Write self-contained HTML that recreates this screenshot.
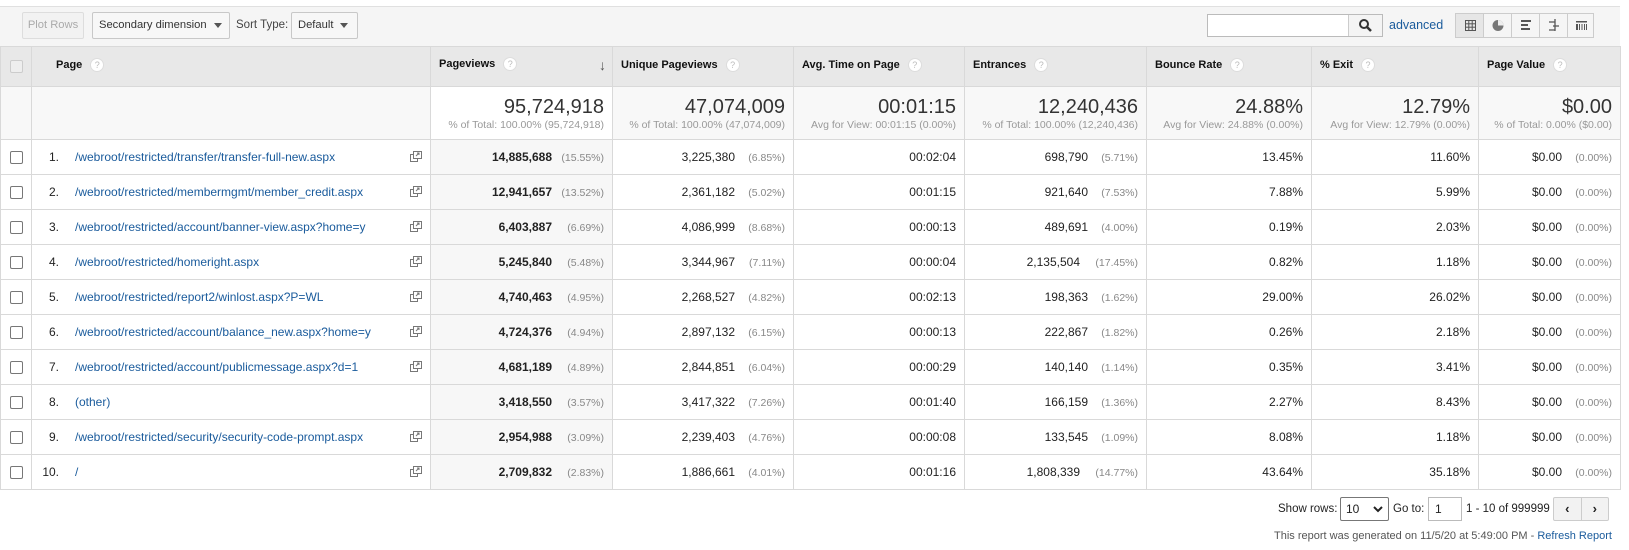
<!DOCTYPE html>
<html><head><meta charset="utf-8"><style>
*{box-sizing:border-box;margin:0;padding:0}
body{width:1629px;height:550px;background:#fff;font-family:"Liberation Sans",Arial,sans-serif;color:#222;position:relative;overflow:hidden;font-size:12px}
.topline{position:absolute;left:0;top:0;width:1620px;height:7px;background:#fff;border-bottom:1px solid #e0e0e0}
.tb{position:absolute;left:0;top:7px;width:1620px;height:39px;background:#f5f5f5}
.btn{position:absolute;top:5px;height:27px;border:1px solid #c8c8c8;border-radius:2px;background:#f7f7f7;font-size:11.2px;line-height:25px;padding:0 6px;color:#333;white-space:nowrap;overflow:hidden}
.caret{display:inline-block;width:0;height:0;border-left:4px solid transparent;border-right:4px solid transparent;border-top:5px solid #555;margin-left:7px;vertical-align:middle}
table{position:absolute;left:0;top:46px;border-collapse:collapse;width:1620px;table-layout:fixed}
td,th{border:1px solid #d9d9d9;font-size:12px;white-space:nowrap}
th{background:#e8e8e8;height:40px;text-align:left;font-weight:bold;font-size:11px;padding-left:8px;color:#111;padding-bottom:3px}
.q{display:inline-block;width:14px;height:14px;border-radius:50%;background:#fff;border:1px solid #ddd;color:#bbb;font-size:9px;line-height:12px;text-align:center;font-weight:normal;margin-left:8px;vertical-align:middle}
tr.tot td{height:53px;background:#f8f8f8;text-align:right;padding-right:8px;vertical-align:top;padding-top:9px}
.big{font-size:20px;color:#333;line-height:22px}
.sm{font-size:10.5px;color:#999;line-height:14px}
tr.r td{height:35px;text-align:right;padding-right:8px;color:#222}
tr.r td.pv{background:#f7f7f7;font-weight:bold}
.pc{color:#888;font-size:10.5px;font-weight:normal;display:inline-block;width:52px;text-align:right}
.pc2{color:#888;font-size:10.5px;display:inline-block;width:50px;text-align:right}
.cb{width:13px;height:13px;border:1px solid #777;border-radius:2px;display:inline-block;background:#fff;vertical-align:middle}
td.c0{text-align:center!important;padding:0!important}
td.pg{text-align:left!important;padding:0!important;position:relative}
.n{display:inline-block;width:27px;text-align:right;margin-right:16px}
a{color:#1a5b9c;text-decoration:none}
.cp{position:absolute;left:378px;top:11px;width:12px;height:11px}
</style></head><body>
<div class="topline"></div>
<div class="tb">
<div class="btn" style="left:22px;width:62px;padding:0;text-align:center;color:#aaa;background:#f2f2f2;border-color:#ddd">Plot Rows</div>
<div class="btn" style="left:92px;width:138px">Secondary dimension<span class="caret"></span></div>
<div style="position:absolute;left:236px;top:5px;line-height:27px;font-size:11.5px;color:#444">Sort Type:</div>
<div class="btn" style="left:291px;width:67px">Default<span class="caret"></span></div>
<div style="position:absolute;left:1207px;top:7px;width:176px;height:23px;border:1px solid #bbb;background:#fff"><div style="position:absolute;left:140px;top:0;width:34px;height:21px;border-left:1px solid #ccc;background:#f4f4f4"><svg width="34" height="21"><circle cx="15" cy="9" r="4" fill="none" stroke="#333" stroke-width="2"/><line x1="18" y1="12" x2="22" y2="16" stroke="#333" stroke-width="2.5"/></svg></div></div>
<div style="position:absolute;left:1389px;top:8px;line-height:20px;font-size:12.5px;color:#1a5b9c">advanced</div>
<div style="position:absolute;left:1455px;top:6px;width:139px;height:25px;border:1px solid #ccc;background:#f5f5f5;display:flex">
<div style="width:28px;border-right:1px solid #ccc;background:#e6e6e6"><svg width="28" height="23"><g stroke="#555" fill="none"><rect x="9.5" y="6.5" width="10" height="10"/><line x1="12.8" y1="6.5" x2="12.8" y2="16.5"/><line x1="16.2" y1="6.5" x2="16.2" y2="16.5"/><line x1="9.5" y1="9.8" x2="19.5" y2="9.8"/><line x1="9.5" y1="13.2" x2="19.5" y2="13.2"/></g></svg></div>
<div style="width:28px;border-right:1px solid #ccc"><svg width="28" height="23"><circle cx="14" cy="11.5" r="5.5" fill="#777"/><path d="M14 11.5V6A5.5 5.5 0 0 1 19.5 11.5Z" fill="#eee"/></svg></div>
<div style="width:28px;border-right:1px solid #ccc"><svg width="28" height="23"><rect x="9" y="6" width="10" height="2" fill="#555"/><rect x="9" y="10" width="7" height="2" fill="#555"/><rect x="9" y="14" width="9" height="2" fill="#555"/></svg></div>
<div style="width:28px;border-right:1px solid #ccc"><svg width="28" height="23"><g stroke="#555" stroke-width="1.3" fill="none"><path d="M9 8h6M15 5v12M13 12h6M9 16h6"/></g></svg></div>
<div style="width:27px"><svg width="27" height="23"><g fill="#555"><rect x="8" y="7" width="11" height="1.5"/><rect x="8" y="10" width="2" height="6"/><rect x="11" y="10" width="1" height="6"/><rect x="13.5" y="10" width="1" height="6"/><rect x="16" y="10" width="1" height="6"/><rect x="18" y="10" width="1" height="6"/></g></svg></div>
</div>
</div>
<table>
<colgroup><col style="width:31px"><col style="width:399px"><col style="width:182px"><col style="width:181px"><col style="width:171px"><col style="width:182px"><col style="width:165px"><col style="width:167px"><col style="width:142px"></colgroup>
<tr><th style="text-align:center;padding:0"><span class="cb" style="border-color:#ccc;background:#eee"></span></th><th style="padding-left:24px">Page<span class="q">?</span></th><th>Pageviews<span class="q">?</span><span style="float:right;margin-right:6px;font-size:14px;color:#555">↓</span></th><th>Unique Pageviews<span class="q">?</span></th><th>Avg. Time on Page<span class="q">?</span></th><th>Entrances<span class="q">?</span></th><th>Bounce Rate<span class="q">?</span></th><th>% Exit<span class="q">?</span></th><th>Page Value<span class="q">?</span></th></tr>
<tr class="tot"><td></td><td></td>
<td style="background:#fff"><div class="big">95,724,918</div><div class="sm">% of Total: 100.00% (95,724,918)</div></td>
<td><div class="big">47,074,009</div><div class="sm">% of Total: 100.00% (47,074,009)</div></td>
<td><div class="big">00:01:15</div><div class="sm">Avg for View: 00:01:15 (0.00%)</div></td>
<td><div class="big">12,240,436</div><div class="sm">% of Total: 100.00% (12,240,436)</div></td>
<td><div class="big">24.88%</div><div class="sm">Avg for View: 24.88% (0.00%)</div></td>
<td><div class="big">12.79%</div><div class="sm">Avg for View: 12.79% (0.00%)</div></td>
<td><div class="big">$0.00</div><div class="sm">% of Total: 0.00% ($0.00)</div></td></tr>
<tr class="r"><td class="c0"><span class="cb"></span></td><td class="pg"><span class="n">1.</span><a>/webroot/restricted/transfer/transfer-full-new.aspx</a><svg class="cp" viewBox="0 0 12 11"><g fill="none" stroke="#777"><rect x="0.5" y="3.5" width="7" height="7"/><rect x="3.5" y="0.5" width="8" height="7" fill="#fff"/><path d="M6 5l3-3M7 2h2v2"/></g></svg></td><td class="pv">14,885,688<span class="pc">(15.55%)</span></td><td>3,225,380<span class="pc2">(6.85%)</span></td><td>00:02:04</td><td>698,790<span class="pc2">(5.71%)</span></td><td>13.45%</td><td>11.60%</td><td>$0.00<span class="pc2">(0.00%)</span></td></tr>
<tr class="r"><td class="c0"><span class="cb"></span></td><td class="pg"><span class="n">2.</span><a>/webroot/restricted/membermgmt/member_credit.aspx</a><svg class="cp" viewBox="0 0 12 11"><g fill="none" stroke="#777"><rect x="0.5" y="3.5" width="7" height="7"/><rect x="3.5" y="0.5" width="8" height="7" fill="#fff"/><path d="M6 5l3-3M7 2h2v2"/></g></svg></td><td class="pv">12,941,657<span class="pc">(13.52%)</span></td><td>2,361,182<span class="pc2">(5.02%)</span></td><td>00:01:15</td><td>921,640<span class="pc2">(7.53%)</span></td><td>7.88%</td><td>5.99%</td><td>$0.00<span class="pc2">(0.00%)</span></td></tr>
<tr class="r"><td class="c0"><span class="cb"></span></td><td class="pg"><span class="n">3.</span><a>/webroot/restricted/account/banner-view.aspx?home=y</a><svg class="cp" viewBox="0 0 12 11"><g fill="none" stroke="#777"><rect x="0.5" y="3.5" width="7" height="7"/><rect x="3.5" y="0.5" width="8" height="7" fill="#fff"/><path d="M6 5l3-3M7 2h2v2"/></g></svg></td><td class="pv">6,403,887<span class="pc">(6.69%)</span></td><td>4,086,999<span class="pc2">(8.68%)</span></td><td>00:00:13</td><td>489,691<span class="pc2">(4.00%)</span></td><td>0.19%</td><td>2.03%</td><td>$0.00<span class="pc2">(0.00%)</span></td></tr>
<tr class="r"><td class="c0"><span class="cb"></span></td><td class="pg"><span class="n">4.</span><a>/webroot/restricted/homeright.aspx</a><svg class="cp" viewBox="0 0 12 11"><g fill="none" stroke="#777"><rect x="0.5" y="3.5" width="7" height="7"/><rect x="3.5" y="0.5" width="8" height="7" fill="#fff"/><path d="M6 5l3-3M7 2h2v2"/></g></svg></td><td class="pv">5,245,840<span class="pc">(5.48%)</span></td><td>3,344,967<span class="pc2">(7.11%)</span></td><td>00:00:04</td><td>2,135,504<span class="pc2" style="width:58px">(17.45%)</span></td><td>0.82%</td><td>1.18%</td><td>$0.00<span class="pc2">(0.00%)</span></td></tr>
<tr class="r"><td class="c0"><span class="cb"></span></td><td class="pg"><span class="n">5.</span><a>/webroot/restricted/report2/winlost.aspx?P=WL</a><svg class="cp" viewBox="0 0 12 11"><g fill="none" stroke="#777"><rect x="0.5" y="3.5" width="7" height="7"/><rect x="3.5" y="0.5" width="8" height="7" fill="#fff"/><path d="M6 5l3-3M7 2h2v2"/></g></svg></td><td class="pv">4,740,463<span class="pc">(4.95%)</span></td><td>2,268,527<span class="pc2">(4.82%)</span></td><td>00:02:13</td><td>198,363<span class="pc2">(1.62%)</span></td><td>29.00%</td><td>26.02%</td><td>$0.00<span class="pc2">(0.00%)</span></td></tr>
<tr class="r"><td class="c0"><span class="cb"></span></td><td class="pg"><span class="n">6.</span><a>/webroot/restricted/account/balance_new.aspx?home=y</a><svg class="cp" viewBox="0 0 12 11"><g fill="none" stroke="#777"><rect x="0.5" y="3.5" width="7" height="7"/><rect x="3.5" y="0.5" width="8" height="7" fill="#fff"/><path d="M6 5l3-3M7 2h2v2"/></g></svg></td><td class="pv">4,724,376<span class="pc">(4.94%)</span></td><td>2,897,132<span class="pc2">(6.15%)</span></td><td>00:00:13</td><td>222,867<span class="pc2">(1.82%)</span></td><td>0.26%</td><td>2.18%</td><td>$0.00<span class="pc2">(0.00%)</span></td></tr>
<tr class="r"><td class="c0"><span class="cb"></span></td><td class="pg"><span class="n">7.</span><a>/webroot/restricted/account/publicmessage.aspx?d=1</a><svg class="cp" viewBox="0 0 12 11"><g fill="none" stroke="#777"><rect x="0.5" y="3.5" width="7" height="7"/><rect x="3.5" y="0.5" width="8" height="7" fill="#fff"/><path d="M6 5l3-3M7 2h2v2"/></g></svg></td><td class="pv">4,681,189<span class="pc">(4.89%)</span></td><td>2,844,851<span class="pc2">(6.04%)</span></td><td>00:00:29</td><td>140,140<span class="pc2">(1.14%)</span></td><td>0.35%</td><td>3.41%</td><td>$0.00<span class="pc2">(0.00%)</span></td></tr>
<tr class="r"><td class="c0"><span class="cb"></span></td><td class="pg"><span class="n">8.</span><a>(other)</a></td><td class="pv">3,418,550<span class="pc">(3.57%)</span></td><td>3,417,322<span class="pc2">(7.26%)</span></td><td>00:01:40</td><td>166,159<span class="pc2">(1.36%)</span></td><td>2.27%</td><td>8.43%</td><td>$0.00<span class="pc2">(0.00%)</span></td></tr>
<tr class="r"><td class="c0"><span class="cb"></span></td><td class="pg"><span class="n">9.</span><a>/webroot/restricted/security/security-code-prompt.aspx</a><svg class="cp" viewBox="0 0 12 11"><g fill="none" stroke="#777"><rect x="0.5" y="3.5" width="7" height="7"/><rect x="3.5" y="0.5" width="8" height="7" fill="#fff"/><path d="M6 5l3-3M7 2h2v2"/></g></svg></td><td class="pv">2,954,988<span class="pc">(3.09%)</span></td><td>2,239,403<span class="pc2">(4.76%)</span></td><td>00:00:08</td><td>133,545<span class="pc2">(1.09%)</span></td><td>8.08%</td><td>1.18%</td><td>$0.00<span class="pc2">(0.00%)</span></td></tr>
<tr class="r"><td class="c0"><span class="cb"></span></td><td class="pg"><span class="n">10.</span><a>/</a><svg class="cp" viewBox="0 0 12 11"><g fill="none" stroke="#777"><rect x="0.5" y="3.5" width="7" height="7"/><rect x="3.5" y="0.5" width="8" height="7" fill="#fff"/><path d="M6 5l3-3M7 2h2v2"/></g></svg></td><td class="pv">2,709,832<span class="pc">(2.83%)</span></td><td>1,886,661<span class="pc2">(4.01%)</span></td><td>00:01:16</td><td>1,808,339<span class="pc2" style="width:58px">(14.77%)</span></td><td>43.64%</td><td>35.18%</td><td>$0.00<span class="pc2">(0.00%)</span></td></tr>
</table>
<div style="position:absolute;left:1278px;top:501px;font-size:11.5px;line-height:16px;white-space:nowrap">Show rows:</div>
<div style="position:absolute;left:1340px;top:497px;width:49px;height:24px;border:1px solid #777;border-radius:2px;font-size:12px;line-height:22px;padding-left:5px">10<svg style="position:absolute;right:5px;top:8px" width="10" height="7"><path d="M1 1l4 4 4-4" fill="none" stroke="#222" stroke-width="2"/></svg></div>
<div style="position:absolute;left:1393px;top:501px;font-size:11.5px;line-height:16px;white-space:nowrap">Go to:</div>
<div style="position:absolute;left:1428px;top:497px;width:34px;height:24px;border:1px solid #bbb;font-size:12px;line-height:22px;padding-left:6px">1</div>
<div style="position:absolute;left:1466px;top:501px;font-size:11.5px;line-height:16px;color:#222;white-space:nowrap">1 - 10 of 999999</div>
<div style="position:absolute;left:1553px;top:497px;width:56px;height:24px;border:1px solid #ccc;border-radius:2px;background:#f2f2f2;display:flex;font-weight:bold;font-size:13px;line-height:22px;text-align:center"><div style="flex:1;border-right:1px solid #ccc">&lsaquo;</div><div style="flex:1">&rsaquo;</div></div>
<div style="position:absolute;left:1274px;top:529px;font-size:11px;line-height:14px;color:#555;white-space:nowrap">This report was generated on 11/5/20 at 5:49:00 PM - <a>Refresh Report</a></div>
</body></html>
